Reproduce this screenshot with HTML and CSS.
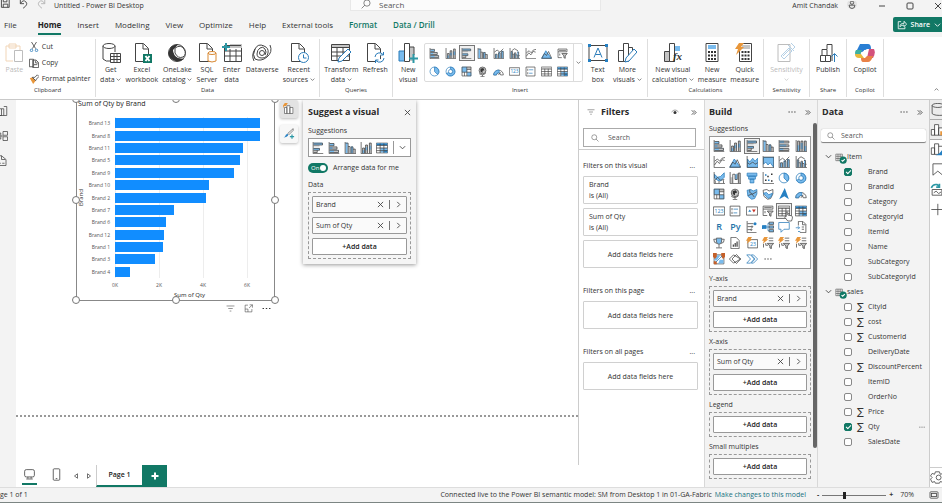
FILE: index.html
```html
<!DOCTYPE html>
<html lang="en">
<head>
    <meta charset="UTF-8">
    <meta name="viewport" content="width=device-width, initial-scale=1.0">
    <title>Untitled - Power BI Desktop</title>
    <link rel="stylesheet" href="styles.css">
</head>
<body>
    <!-- icon sprite -->
    <svg class="sprite" aria-hidden="true">
        <symbol id="barstack" viewBox="0 0 16 16"><path class="b" d="M2 2h6v3H2zM2 6.500h10v3H2zM2 11h12v3H2z"/><path class="g" d="M6 6.500h6v3H6zM8 11h6v3H8z"/><path class="k" d="M1.500 0v15.500H15M2 2h6v3H2M2 6.500h10v3H2M2 11h12v3H2"/></symbol>
        <symbol id="colstack" viewBox="0 0 16 16"><path class="g" d="M3 8h3v7H3zM7 4h3v11H7zM12 1h3v14h-3z"/><path class="b" d="M3 11h3v4H3zM7 7h3v4H7zM12 5h3v5h-3z"/><path class="k" d="M1.500 0v15.500H16M3.500 15V8H6v7M7.500 15V4H10v11M12.500 15V1.500H15V15"/></symbol>
        <symbol id="barclus" viewBox="0 0 16 16"><path class="b" d="M2 1h12v3H2zM2 8h8v3H2z"/><path class="g" d="M2 4h8v2H2zM2 11h5v3H2z"/><path class="k" d="M1.500 0v15.500H15M2 1.500h12V4H2M2 8.500h8V11H2M7 11v3H2"/></symbol>
        <symbol id="colclus" viewBox="0 0 16 16"><path class="b" d="M2 1h3v14H2zM9 6h3v9H9z"/><path class="g" d="M5 6h2v9H5zM12 9h3v6h-3z"/><path class="k" d="M1.500 0v15.500H16M5.500 15V1.500H2M5.500 6H8v9M9.500 15V6.500H12V15M12 9.500h3V15"/></symbol>
        <symbol id="bar100" viewBox="0 0 16 16"><path class="g" d="M2 1h12v3H2zM2 6h12v3H2zM2 11h12v3H2z"/><path class="b" d="M2 1h6v3H2zM2 6h9v3H2zM2 11h5v3H2z"/><path class="k" d="M1.500 0v15.500H15M2 1.500h12.500V4H2M2 6.500h12.500V9H2M2 11.500h12.500V14H2"/></symbol>
        <symbol id="col100" viewBox="0 0 16 16"><path class="g" d="M3 1h3v14H3zM7.500 1h3v14h-3zM12 1h3v14h-3z"/><path class="b" d="M3 7h3v8H3zM7.500 4h3v8h-3zM12 8h3v7h-3z"/><path class="k" d="M1.500 0v15.500H16M3.500 15V1.500H6V15M8 15V1.500h2.500V15M12.500 15V1.500H15V15"/></symbol>
        <symbol id="line" viewBox="0 0 16 16"><path class="k" d="M1.500 0v15.500H16M2 12l3.500-5 3 3L12 5l3.500 1M2 7l4-3 3 3 3-4 4-1"/></symbol>
        <symbol id="area" viewBox="0 0 16 16"><path class="b s" d="M1 15l6-11 8 11z"/><path class="k" d="M1 15l4-7 3 3 3-6 4.500 10z"/></symbol>
        <symbol id="stackarea" viewBox="0 0 16 16"><path class="b s" d="M2 4l3 4 4-5 3 4 3.500-4V15H2z"/><path class="k" d="M1.500 0v15.500H16M2 9l3 2 4-3 3 3 3.500-2"/></symbol>
        <symbol id="area100" viewBox="0 0 16 16"><path class="b s" d="M2 2h13.500v13L11 9l-3 3-3-4-3 3z"/><path class="k" d="M1.500 0v15.500H16V1.500H2"/></symbol>
        <symbol id="combo1" viewBox="0 0 16 16"><path class="b" d="M3 9h3v6H3zM7.500 6h3v9h-3zM12 4h3v11h-3z"/><path class="k" d="M1.500 0v15.500H16M3.500 15V9H6v6M8 15V7h2.500v8M12.500 15V5H15v10M2 6l4-3 4 3 5-5"/></symbol>
        <symbol id="combo2" viewBox="0 0 16 16"><path class="b" d="M3 5h2v10H3zM8 8h2v7H8zM12 5h2v10h-2z"/><path class="k" d="M1.500 0v15.500H16M3 15V5h2v10M5 9h2v6M8 15V7h2v8M10 10h2v5M12 6h2v9M14 11h1.500M4 4l4-3 5 3"/></symbol>
        <symbol id="ribbonchart" viewBox="0 0 16 16"><path class="b s" d="M2 3l4 4 4-1 5-5v6l-5 5-4-1-4-3z"/><path class="k" d="M1.500 0v15.500H16M2 12l4-5 4 4 5-1M3 15v-3M8 15v-3M14 15v-4"/></symbol>
        <symbol id="waterfall" viewBox="0 0 16 16"><path class="g" d="M2 7h3v8H2zM12 1h3v14h-3z"/><path class="b" d="M8 3h3v7H8z"/><path class="k" d="M1.500 0v15.500H16M5 15V3h3v7h3V2M12.500 15V1.500H15V15"/></symbol>
        <symbol id="funnel" viewBox="0 0 16 16"><path class="b s" d="M1.500 1.500h13v4h-13zM3.500 5.500h9v4h-9zM5.500 9.500h5v5h-5z"/></symbol>
        <symbol id="scatter" viewBox="0 0 16 16"><path class="k" d="M1.500 0v15.500H16"/><path class="d" d="M4 10h2v2H4zM7 5h2v2H7zM12 2h2v2h-2zM12 11h2v2h-2z"/><path class="bb" d="M8 10h2v2H8zM4 3h2v2H4z"/></symbol>
        <symbol id="pie" viewBox="0 0 16 16"><circle class="w s" cx="8" cy="8" r="6.500"/><path class="b s" d="M8 1.500a6.500 6.500 0 0 1 4.500 11L8 8z"/></symbol>
        <symbol id="donut" viewBox="0 0 16 16"><circle class="w s" cx="8" cy="8" r="6.500"/><path class="b s" d="M8 1.500A6.500 6.500 0 1 1 2 11l3.500-1.500A3 3 0 1 0 8 5z"/><circle class="w s" cx="8" cy="8" r="3"/></symbol>
        <symbol id="treemap" viewBox="0 0 16 16"><path class="b" d="M1 1h8v8H1zM9 9h6v6H9z"/><path class="g" d="M9 1h6v4H9z"/><path class="k" d="M1.500 1.500h13v13h-13zM8.500 1.500v13M1.500 9h7M8.500 5h6M8.500 9h6M5 9v5.500"/></symbol>
        <symbol id="globe" viewBox="0 0 16 16"><circle class="g k" cx="8" cy="6.500" r="5"/><path class="d" d="M5 4l4-1 2 3-3 1v3L5 8z"/><path class="k" d="M3 11q5 4 10-1M8 13v2M5 15.500h6"/></symbol>
        <symbol id="map" viewBox="0 0 16 16"><path class="b s" d="M1.500 3l5-1 3 2 5-2v6l-3 6-4 1-5-4z"/><path class="k" d="M5 2v4l4 2 5-3M3 10l5-2 3 4"/></symbol>
        <symbol id="shapemap" viewBox="0 0 16 16"><path class="w k" d="M1.500 3l5-1 3 2 5-2v6l-3 6-4 1-5-4z"/><path class="b s" d="M2 7l4-1 3 3 5-2-2 5-4 2z"/></symbol>
        <symbol id="azure" viewBox="0 0 16 16"><path class="bb" d="M9 0l5.500 15L8.500 11 1.500 15z"/></symbol>
        <symbol id="gauge" viewBox="0 0 16 16"><path class="w k" d="M1 13a7 7 0 0 1 14 0h-4a3 3 0 0 0-6 0z"/><path class="b s" d="M1 13A7 7 0 0 1 9 6v4a3 3 0 0 0-4 3z"/><path class="k" d="M8 13l3-4"/></symbol>
        <symbol id="card" viewBox="0 0 16 16"><path class="w k" d="M.500 2.500h15v11H.500z"/><text x="8" y="10.500" class="num">123</text></symbol>
        <symbol id="multicard" viewBox="0 0 16 16"><path class="w k" d="M1.500 1.500h13v13h-13z"/><path class="s" d="M6 5.500h6M6 10.500h5"/><path class="k" d="M4 4v3M4 9v3"/></symbol>
        <symbol id="kpi" viewBox="0 0 16 16"><path class="w k" d="M.500 2.500h15v11H.500z"/><path class="bb" d="M3 9l2-3 2 3z"/><path class="red" d="M8 6h5l-2.500 4z"/></symbol>
        <symbol id="slicer" viewBox="0 0 16 16"><path class="w k" d="M1.500 1.500h13v4h-13zM1.500 5.500V14H7"/><path class="g k" d="M7 8h8l-3 3.500V15l-2-1v-2.500z"/><path class="k" d="M3 3.500h10M4 8v3"/></symbol>
        <symbol id="table" viewBox="0 0 16 16"><path class="w k" d="M.500 1.500h15v13H.500z"/><path class="g" d="M1 2h14v2H1z"/><path class="k" d="M.500 4.500h15M.500 8h15M.500 11.500h15M5.500 4v10.500M10.500 4v10.500"/></symbol>
        <symbol id="matrix" viewBox="0 0 16 16"><path class="w k" d="M.500 1.500h15v13H.500z"/><path class="b" d="M1 2h14v3H1zM6 8h9v6H6z"/><path class="bb" d="M1 2h14v2H1zM11 11h4v3h-4z"/><path class="k" d="M.500 4.500h15M.500 8h15M.500 11.500h15M5.500 2v12.500M10.500 2v12.500"/></symbol>
        <symbol id="influencer" viewBox="0 0 16 16"><path class="k" d="M1.500 0v15.500H14M2 3.500h8M2 7.500h5M2 11.500h4"/><circle class="bb" cx="12" cy="3.500" r="2"/><circle class="g k" cx="8" cy="7.500" r="1"/><circle class="g k" cx="7" cy="11.500" r="1"/></symbol>
        <symbol id="decomp" viewBox="0 0 16 16"><path class="s" d="M5 8h4M8 8V3h2M8 8v5h2"/><path class="bb" d="M0 5.500h6v5H0z"/><path class="b k" d="M9.500 1.500h6v3h-6zM9.500 6.500h6v3h-6zM9.500 11.500h6v3h-6z"/></symbol>
        <symbol id="qna" viewBox="0 0 16 16"><path class="w s" d="M1 2h14v9H8l-4 4v-4H1z"/></symbol>
        <symbol id="narrative" viewBox="0 0 16 16"><path class="w k" d="M4.500 6V.500h6l4 4v11h-8"/><path class="k" d="M10 1v4h4M9 8h3M9 11h3"/><path class="s" d="M1 9h5M4 7l2 2-2 2M4 14h3"/></symbol>
        <symbol id="trophy" viewBox="0 0 16 16"><path class="b k" d="M4.500 1.500h7V7L8 10 4.500 7z"/><path class="k" d="M4 3H1l1 4 4 2M12 3h3l-1 4-4 2M8 10v4M4 14.500h8"/></symbol>
        <symbol id="paginated" viewBox="0 0 16 16"><path class="w k" d="M2.500.500h7l4 4v11h-11z"/><path class="d" d="M5 10h1.500v3H5zM7.500 8H9v5H7.500zM10 6h1.500v7H10z"/></symbol>
        <symbol id="newcard" viewBox="0 0 16 16"><path class="w k" d="M2.500 3.500h13v11h-13z"/><text x="9.500" y="12" class="num">23</text><use href="#bolt"/></symbol>
        <symbol id="bolt" viewBox="0 0 16 16"><path class="o" d="M3 0h5L6 3h2.500L1 9l1.500-4H0z"/></symbol>
        <symbol id="boltslicer" viewBox="0 0 16 16"><path class="k" d="M9 1.500h6M9 5h6M2 9v5M5 8v3h3"/><path class="g k" d="M7 8.500h8.500l-3 3.500v3.500l-2-1V12z"/><use href="#bolt"/></symbol>
        <symbol id="arcgis" viewBox="0 0 16 16"><path class="w k" d="M1.500 2.500h13v12h-13z"/><path class="b" d="M5 3h5l-5 7H2V7zM9 9h5v5H7z"/><path class="rust" d="M0 0h5v5l-2.500 3L0 5zM11 0h5v5l-2.500 3L11 5zM1 11h4v4H1z"/><path class="s" d="M4 12l8-8"/></symbol>
        <symbol id="powerapps" viewBox="0 0 16 16"><path class="w k" d="M.500 8L6 2.500 15.500 8 6 13.500z"/><path class="k" d="M4 8l6-6 5.500 6-5.500 6z"/></symbol>
        <symbol id="automate" viewBox="0 0 16 16"><path class="w s" d="M1 2.500h5L11 8l-5 5.500H1L6 8z"/><path class="w s" d="M7 2.500h3L15.500 8 10 13.500H7L12 8z"/></symbol>
        <symbol id="dots" viewBox="0 0 16 16"><path class="d" d="M1 7h2.500v2H1zM6.750 7h2.500v2h-2.500zM12.500 7H15v2h-2.500z"/></symbol>

        <symbol id="close" viewBox="0 0 8 8"><path class="k" d="M1 1l6 6M7 1L1 7"/></symbol>
        <symbol id="right" viewBox="0 0 8 8"><path class="k" d="M2.500 1l3 3-3 3"/></symbol>
        <symbol id="down" viewBox="0 0 8 8"><path class="k" d="M1 2.500l3 3 3-3"/></symbol>
        <symbol id="double" viewBox="0 0 8 8"><path class="k" d="M2 1.500L4.500 4 2 6.500M4.500 1.500L7 4 4.500 6.500"/></symbol>
        <symbol id="search" viewBox="0 0 16 16"><circle class="k" cx="6.500" cy="6.500" r="5"/><path class="k" d="M10 10l5 5"/></symbol>
        <symbol id="filter" viewBox="0 0 16 16"><path class="k" d="M1 3.500h14M4 8h8M6.500 12.500h3"/></symbol>
        <symbol id="eye" viewBox="0 0 16 16"><path class="k" d="M1 8q7-8 14 0"/><circle class="d" cx="8" cy="9" r="3"/></symbol>
        <symbol id="dbtable" viewBox="0 0 22 20"><path class="k" d="M1.500 2h12v12h-12zM1.500 6h12M1.500 10h12M5.500 2v12M9.500 2v12"/><circle class="green" cx="15" cy="13" r="6.500"/><path class="tick" d="M12 13l2 2 4-4"/></symbol>
        <symbol id="addvisual" viewBox="0 0 20 20"><path class="w k" d="M2.500 7.500h4v10h-4zM6.500 4.500h5v13h-5zM11.500 7.500h5v10h-5z"/><path class="o" d="M3 0h5L5 5H2l-1 4-1-5z"/></symbol>
        <symbol id="brush" viewBox="0 0 20 20"><path class="k" d="M17 1L8 9l2 2 7-7z"/><path class="bb" d="M8 10q3 4-7 6 3-1 4-5z"/><path class="teal" d="M15 11v7M11.500 14.500h7"/></symbol>
    </svg>

    <div class="app">
        <header class="titlebar">
            <div class="title-left">
                <svg class="ti" viewBox="0 0 12 12"><path class="k" d="M1 0v8h8.500V0M3 8V4.500h5V8M3 0v2h4V0"/></svg>
                <svg class="ti" viewBox="0 0 12 12"><path class="k" d="M2 0v4h4M2 4q3-5 6-2t-3 7"/></svg>
                <svg class="ti faded" viewBox="0 0 12 12"><path class="k" d="M9 0v4H5M9 4Q6-1 3 2t3 7"/></svg>
                <span>Untitled - Power BI Desktop</span>
            </div>
            <label class="title-search">
                <svg class="flip"><use href="#search"/></svg>
                <input type="text" placeholder="Search" aria-label="Search">
            </label>
            <div class="title-right">
                <span>Amit Chandak</span>
                <svg class="avatar" viewBox="0 0 12 12"><circle cx="6" cy="4" r="6" fill="#e3e3e3"/><circle class="k" cx="6" cy="2" r="2"/><path class="k" d="M2.500 5h7q0 4-3.500 4t-3.500-4z"/></svg>
                <svg class="win" viewBox="0 0 8 8"><path class="k" d="M1 4h6"/></svg>
                <svg class="win" viewBox="0 0 8 8"><rect class="k" x="1" y="1" width="6" height="6" rx="1"/></svg>
                <svg class="win"><use href="#close"/></svg>
            </div>
        </header>

        <nav class="tabs">
            <a href="#" class="file">File</a>
            <a href="#" class="active">Home</a>
            <a href="#">Insert</a>
            <a href="#">Modeling</a>
            <a href="#">View</a>
            <a href="#">Optimize</a>
            <a href="#">Help</a>
            <a href="#">External tools</a>
            <a href="#" class="context">Format</a>
            <a href="#" class="context">Data / Drill</a>
            <button class="share">
                <svg viewBox="0 0 12 12"><path d="M5 2H1.500v8.500h8V8M3.500 8q0-4 5-4V1.500L11.500 5 8.500 8V6q-3 0-5 2z"/></svg>
                Share
                <svg class="chev" viewBox="0 0 8 8"><path d="M1 2.500l3 3 3-3"/></svg>
            </button>
        </nav>

        <section class="ribbon">
            <div class="group clipboard">
                <div class="tools">
                    <button class="tool single faded">
                        <svg viewBox="0 0 20 20"><path class="of" d="M9 18H2V3h14v4M5 1h7v4H5z"/><path class="w k" d="M10.500 7.500h8v11h-8z"/></svg>
                        Paste
                    </button>
                    <div class="stack">
                        <button><svg viewBox="0 0 12 12"><path class="k" d="M3 0l5 8M9 0L4 8"/><circle class="s" cx="3" cy="10" r="1.500"/><circle class="s" cx="9" cy="10" r="1.500"/></svg>Cut</button>
                        <button><svg viewBox="0 0 12 12"><path class="w k" d="M.500 1.500h5v9h-5zM4.500 2.500h4l3 3v6h-7z"/><path class="k" d="M8 3v3h3M6 8h4"/></svg>Copy</button>
                        <button><svg viewBox="0 0 12 12"><path class="o" d="M1 5l3-1 4 4-3 4z"/><path class="k" d="M4 4l4 4 1-2 3-3-2-2-3 3z"/></svg>Format painter</button>
                    </div>
                </div>
                <div class="group-name">Clipboard</div>
            </div>

            <div class="group data">
                <div class="tools">
                    <button class="tool">
                        <svg viewBox="0 0 20 20"><path class="w k" d="M2 3v13q3 3 7 2M14 3v6"/><ellipse class="w k" cx="8" cy="3" rx="6" ry="2.500"/><path class="w k" d="M9.500 10.500h10v9h-10zM9.500 13.500h10M9.500 16.500h10M13 11v8M16 11v8"/></svg>
                        Get<br>data <svg class="chev"><use href="#down"/></svg>
                    </button>
                    <button class="tool">
                        <svg viewBox="0 0 20 20"><path class="w k" d="M3.500.500h8l5 5v13h-13zM11 1v5h5"/><path class="xl" d="M11 11h9v9h-9z"/><path class="tick" d="M13.500 13l4 5M17.500 13l-4 5"/></svg>
                        Excel<br>workbook
                    </button>
                    <button class="tool">
                        <svg viewBox="0 0 20 20"><circle class="w k" cx="10" cy="10" r="8.500"/><path class="d" d="M2 8Q4 1 11 1.500L6 7q0 5 5 8l6 1q-5 4-11 1T2 8z"/><path class="w k" d="M8 5q6-4 9 1t-1 8q-5 2-8-4z"/></svg>
                        OneLake<br>catalog <svg class="chev"><use href="#down"/></svg>
                    </button>
                    <button class="tool">
                        <svg viewBox="0 0 20 20"><path class="w k" d="M2.500.500h8l5 5v13h-13zM10 1v5h5"/><path class="w of" d="M11 10v8q4 2 8 0v-8"/><ellipse class="w of" cx="15" cy="10" rx="4" ry="1.500"/></svg>
                        SQL<br>Server
                    </button>
                    <button class="tool">
                        <svg viewBox="0 0 20 20"><path class="w k" d="M2.500 2.500h17v16h-17z"/><path class="g" d="M8 1h12v4H8z"/><path class="k" d="M3 8h16M3 13h16M8 6v12M14 6v12M8 2.500h11"/><path class="teal" d="M4 0v8M0 4h8"/></svg>
                        Enter<br>data
                    </button>
                    <button class="tool single">
                        <svg viewBox="0 0 20 20"><path class="k" d="M18 2q3 7-3 12T3 16Q0 12 3 6t9-3q5 2 4 7t-6 5-5-4 3-6 5 1 0 6M2 18q-3-6 1-12"/><circle class="k" cx="10" cy="10" r="2.500"/></svg>
                        Dataverse
                    </button>
                    <button class="tool">
                        <svg viewBox="0 0 20 20"><path class="w k" d="M2.500.500h8l5 5v13h-13zM10 1v5h5"/><circle class="w s" cx="14.500" cy="14.500" r="5"/><path class="s" d="M14.500 11.500v3.500h3"/></svg>
                        Recent<br>sources <svg class="chev"><use href="#down"/></svg>
                    </button>
                </div>
                <div class="group-name">Data</div>
            </div>

            <div class="group queries">
                <div class="tools">
                    <button class="tool">
                        <svg viewBox="0 0 20 20"><path class="w k" d="M.500 1.500h18v16H.500z"/><path class="g" d="M1 2h17v2H1z"/><path class="k" d="M1 4.500h17M1 9h17M1 13h17M6 5v12M12 5v12"/><path class="w s" d="M7 19l1-4 9-9 3 3-9 9z"/></svg>
                        Transform<br>data <svg class="chev"><use href="#down"/></svg>
                    </button>
                    <button class="tool single">
                        <svg viewBox="0 0 20 20"><path class="w k" d="M2.500.500h8l5 5v13h-13zM10 1v5h5"/><path class="w s" d="M10 14a4.500 4.500 0 0 1 8-2.500M19 15a4.500 4.500 0 0 1-8 2.500M18.500 9v3h-3M10.500 20v-3h3"/></svg>
                        Refresh
                    </button>
                </div>
                <div class="group-name">Queries</div>
            </div>

            <div class="group insert">
                <div class="tools">
                    <button class="tool">
                        <svg viewBox="0 0 20 20"><path class="b" d="M1 8h5v10H1z"/><path class="w k" d="M6.500.500h5v18h-5z"/><path class="g" d="M12 4h4v14h-4z"/><path class="k" d="M12 4h4v8"/><path class="s" d="M6 18H1V8h5"/><path class="teal" d="M15.500 11v9M11 15.500h9"/></svg>
                        New<br>visual
                    </button>
                    <div class="gallery">
                        <div class="gallery-grid">
                            <button aria-label="Stacked bar"><svg><use href="#barstack"/></svg></button>
                            <button aria-label="Stacked column"><svg><use href="#colstack"/></svg></button>
                            <button aria-label="Clustered bar" class="on"><svg><use href="#barclus"/></svg></button>
                            <button aria-label="Clustered column"><svg><use href="#colclus"/></svg></button>
                            <button aria-label="Line and column"><svg><use href="#combo1"/></svg></button>
                            <button aria-label="Line and clustered column"><svg><use href="#combo2"/></svg></button>
                            <button aria-label="Line"><svg><use href="#line"/></svg></button>
                            <button aria-label="Area"><svg><use href="#area"/></svg></button>
                            <button aria-label="Slicer"><svg><use href="#slicer"/></svg></button>
                            <button aria-label="Pie"><svg><use href="#pie"/></svg></button>
                            <button aria-label="Donut"><svg><use href="#donut"/></svg></button>
                            <button aria-label="Treemap"><svg><use href="#treemap"/></svg></button>
                            <button aria-label="Map"><svg><use href="#globe"/></svg></button>
                            <button aria-label="Gauge"><svg><use href="#gauge"/></svg></button>
                            <button aria-label="Card"><svg><use href="#card"/></svg></button>
                            <button aria-label="Multi-row card"><svg><use href="#multicard"/></svg></button>
                            <button aria-label="Table"><svg><use href="#table"/></svg></button>
                            <button aria-label="Matrix"><svg><use href="#matrix"/></svg></button>
                        </div>
                        <button class="gallery-more" aria-label="More visuals"><svg class="chev"><use href="#down"/></svg></button>
                    </div>
                    <button class="tool">
                        <svg viewBox="0 0 20 20"><path class="w k" d="M1 2.500h18v15H1z"/><path class="s" d="M6 14.500L10 5l4 9.500M7.500 11.500h5"/><path class="bb" d="M0 1h3v3H0zM17 1h3v3h-3zM0 16h3v3H0zM17 16h3v3h-3z"/></svg>
                        Text<br>box
                    </button>
                    <button class="tool">
                        <svg viewBox="0 0 20 20"><path class="w k" d="M1.500 7.500h5v11h-5zM6.500.500h5v18h-5zM11.500 4.500h4v8"/><path class="w s" d="M8 19l1-4 8-9 3 3-8 9z"/></svg>
                        More<br>visuals <svg class="chev"><use href="#down"/></svg>
                    </button>
                </div>
                <div class="group-name">Insert</div>
            </div>

            <div class="group calc">
                <div class="tools">
                    <button class="tool">
                        <svg viewBox="0 0 20 20"><path class="g k" d="M1.500 8.500h5v10h-5z"/><path class="w k" d="M6.500.500h5v18h-5z"/><path class="b" d="M12 3h5v5h-5z"/><text x="14.500" y="17" class="fx">fx</text></svg>
                        New visual<br>calculation <svg class="chev"><use href="#down"/></svg>
                    </button>
                    <button class="tool">
                        <svg viewBox="0 0 20 20"><path class="w k" d="M4 .500h12v18H4z"/><path class="b" d="M6 2h8v4H6z"/><path class="d" d="M6 8h2v2H6zM9 8h2v2H9zM12 8h2v2h-2zM6 11.500h2v2H6zM9 11.500h2v2H9zM12 11.500h2v2h-2zM6 15h2v2H6zM9 15h2v2H9zM12 15h2v2h-2z"/></svg>
                        New<br>measure
                    </button>
                    <button class="tool">
                        <svg viewBox="0 0 20 20"><path class="w k" d="M4.500.500h12v18h-12z"/><path class="g" d="M7 2h8v4H7z"/><path class="d" d="M6.500 8h2v2h-2zM9.500 8h2v2h-2zM12.500 8h2v2h-2zM6.500 11.500h2v2h-2zM9.500 11.500h2v2h-2zM12.500 11.500h2v2h-2zM6.500 15h2v2h-2zM9.500 15h2v2h-2zM12.500 15h2v2h-2z"/><path class="o" d="M4 0h5L6 4h3L1 12l2-6H0z"/></svg>
                        Quick<br>measure
                    </button>
                </div>
                <div class="group-name">Calculations</div>
            </div>

            <div class="group sens">
                <div class="tools">
                    <button class="tool faded">
                        <svg viewBox="0 0 20 20"><path class="w k" d="M2 1.500h12v17H2z"/><path class="s" d="M5 13l8-8 3 3-8 8zM7 13l7-7M12 2l6 6M15 0l4 4-2 2"/></svg>
                        Sensitivity<br><svg class="chev"><use href="#down"/></svg>
                    </button>
                </div>
                <div class="group-name">Sensitivity</div>
            </div>

            <div class="group publish">
                <div class="tools">
                    <button class="tool single">
                        <svg viewBox="0 0 20 20"><path class="w k" d="M2.500 12.500h5v6h-5zM7.500 12.500h5v6h-5zM4 12V6.500h5V12M9 6V1.500h5V18"/><path class="s" d="M16.500 19V11M13.500 13.500l3-3 3 3"/></svg>
                        Publish
                    </button>
                </div>
                <div class="group-name">Share</div>
            </div>

            <div class="group copilot">
                <div class="tools">
                    <button class="tool single">
                        <svg viewBox="0 0 20 20"><path fill="#2a7fd4" d="M5 1h8q3 0 3 5h-4L7 9H1z"/><path fill="#3eb0a0" d="M1 7h6l-2 6H1q-2-3 0-6z"/><path fill="#e8b93c" d="M0 11h6l3 4H4q-4 0-4-4z"/><path fill="#d3527c" d="M14 6h5q2 4-1 9h-6z"/><path fill="#e98247" d="M12 13h6q-2 6-5 6H8q-2 0-2-4h4z"/><path fill="#fff" d="M9 7h3l-1 5H8z"/></svg>
                        Copilot
                    </button>
                </div>
                <div class="group-name">Copilot</div>
            </div>
            <button class="collapse" aria-label="Collapse ribbon"><svg class="chev" viewBox="0 0 8 8"><path class="k" d="M1 5.500l3-3 3 3"/></svg></button>
        </section>

        <main class="main">
            <nav class="views">
                <svg viewBox="0 0 16 16"><path class="k" d="M0 14h6V5H2M6 5h3v9M9 2h4v12H0"/></svg>
                <svg viewBox="0 0 16 16"><path class="k" d="M0 4h5v8H0M5 8h3M8 2h6v5H8zM8 9h6v5H8z"/></svg>
                <svg viewBox="0 0 16 16"><path class="k" d="M0 1h6l6 5v8H0M6 1v5h5M2 11h3M7 11h3"/></svg>
            </nav>

            <div class="center">
                <div class="work">
                    <div class="canvas">
                        <div class="page">
                            <figure class="visual">
                                <figcaption>Sum of Qty by Brand</figcaption>
                                <div class="chart">
                                    <div class="y-title"><span>Brand</span></div>
                                    <ul class="cats">
                                        <li>Brand 13</li><li>Brand 8</li><li>Brand 11</li><li>Brand 5</li><li>Brand 9</li><li>Brand 10</li><li>Brand 2</li>
                                        <li>Brand 7</li><li>Brand 6</li><li>Brand 12</li><li>Brand 1</li><li>Brand 3</li><li>Brand 4</li>
                                    </ul>
                                    <ul class="bars">
                                        <li><i style="width:94%"></i></li>
                                        <li><i style="width:94%"></i></li>
                                        <li><i style="width:83%"></i></li>
                                        <li><i style="width:81%"></i></li>
                                        <li><i style="width:77%"></i></li>
                                        <li><i style="width:61%"></i></li>
                                        <li><i style="width:59%"></i></li>
                                        <li><i style="width:38%"></i></li>
                                        <li><i style="width:33%"></i></li>
                                        <li><i style="width:32%"></i></li>
                                        <li><i style="width:31%"></i></li>
                                        <li><i style="width:26%"></i></li>
                                        <li><i style="width:10%"></i></li>
                                    </ul>
                                    <div class="ticks"><span>0K</span><span>2K</span><span>4K</span><span>6K</span></div>
                                    <div class="x-title">Sum of Qty</div>
                                </div>
                                <b class="h tl"></b><b class="h tc"></b><b class="h tr"></b>
                                <b class="h ml"></b><b class="h mr"></b>
                                <b class="h bl"></b><b class="h bc"></b><b class="h br"></b>
                                <div class="visual-tools">
                                    <svg><use href="#filter"/></svg>
                                    <svg viewBox="0 0 16 16"><path class="k" d="M7 2H2v12h12V9M10 1.500h5v5M15 1.500L9 7M2 9h5v5"/></svg>
                                    <svg><use href="#dots"/></svg>
                                </div>
                            </figure>

                            <div class="side-tools">
                                <button class="on" aria-label="Suggest a visual"><svg><use href="#addvisual"/></svg></button>
                                <button aria-label="Format visual"><svg><use href="#brush"/></svg></button>
                            </div>

                            <aside class="suggest">
                                <div class="suggest-head">
                                    <h2>Suggest a visual</h2>
                                    <button aria-label="Close"><svg class="x"><use href="#close"/></svg></button>
                                </div>
                                <p>Suggestions</p>
                                <div class="suggest-row">
                                    <svg class="on"><use href="#barclus"/></svg>
                                    <svg><use href="#barstack"/></svg>
                                    <svg><use href="#colclus"/></svg>
                                    <svg><use href="#colstack"/></svg>
                                    <svg><use href="#matrix"/></svg>
                                    <button aria-label="More"><svg class="x"><use href="#down"/></svg></button>
                                </div>
                                <label class="toggle"><input type="checkbox" checked><span class="pill">On</span>Arrange data for me</label>
                                <p>Data</p>
                                <div class="well">
                                    <div class="field"><span>Brand</span><button aria-label="Remove"><svg class="x"><use href="#close"/></svg></button><button class="next" aria-label="Options"><svg class="x"><use href="#right"/></svg></button></div>
                                    <div class="field"><span>Sum of Qty</span><button aria-label="Remove"><svg class="x"><use href="#close"/></svg></button><button class="next" aria-label="Options"><svg class="x"><use href="#right"/></svg></button></div>
                                    <button class="add">+Add data</button>
                                </div>
                            </aside>
                        </div>
                    </div>

                    <aside class="filters">
                        <div class="pane-head">
                            <svg class="lead"><use href="#filter"/></svg>
                            <h2>Filters</h2>
                            <svg class="hi"><use href="#eye"/></svg>
                            <svg class="x"><use href="#double"/></svg>
                        </div>
                        <label class="filter-search"><svg><use href="#search"/></svg><input type="text" placeholder="Search" aria-label="Search filters"></label>
                        <div class="filter-list">
                            <div class="filter-title">Filters on this visual <span>...</span></div>
                            <div class="card">Brand<br>is (All)</div>
                            <div class="card">Sum of Qty<br>is (All)</div>
                            <div class="card drop">Add data fields here</div>
                            <div class="filter-title">Filters on this page <span>...</span></div>
                            <div class="card drop">Add data fields here</div>
                            <div class="filter-title">Filters on all pages <span>...</span></div>
                            <div class="card drop">Add data fields here</div>
                        </div>
                    </aside>
                </div>

                <div class="pages">
                    <button class="device on" aria-label="Desktop layout"><svg viewBox="0 0 16 16"><rect class="k" x="2" y="2" width="12" height="9" rx="2"/><path class="k" d="M4 13.500h8M6 11v2M10 11v2"/></svg></button>
                    <button class="device" aria-label="Mobile layout"><svg viewBox="0 0 16 16"><rect class="k" x="4" y="1" width="8" height="14" rx="1"/><path class="k" d="M7 13h2"/></svg></button>
                    <button class="arrow" aria-label="Previous page"><svg viewBox="0 0 8 8"><path class="k" d="M6 1v6L2 4z"/></svg></button>
                    <button class="arrow" aria-label="Next page"><svg viewBox="0 0 8 8"><path class="k" d="M2 1v6l4-3z"/></svg></button>
                    <button class="page-tab">Page 1</button>
                    <button class="page-add" aria-label="New page"><svg viewBox="0 0 8 8"><path d="M4 .500v7M.500 4h7"/></svg></button>
                </div>
            </div>

            <aside class="build">
                <div class="pane-head">
                    <h2>Build</h2>
                    <svg class="hi"><use href="#dots"/></svg>
                    <svg class="x"><use href="#double"/></svg>
                </div>
                <div class="build-body">
                    <p>Suggestions</p>
                    <div class="visuals">
                        <button><svg><use href="#barstack"/></svg></button>
                        <button><svg><use href="#colstack"/></svg></button>
                        <button class="on"><svg><use href="#barclus"/></svg></button>
                        <button><svg><use href="#colclus"/></svg></button>
                        <button><svg><use href="#bar100"/></svg></button>
                        <button><svg><use href="#col100"/></svg></button>
                        <button><svg><use href="#line"/></svg></button>
                        <button><svg><use href="#area"/></svg></button>
                        <button><svg><use href="#stackarea"/></svg></button>
                        <button><svg><use href="#area100"/></svg></button>
                        <button><svg><use href="#combo1"/></svg></button>
                        <button><svg><use href="#combo2"/></svg></button>
                        <button><svg><use href="#ribbonchart"/></svg></button>
                        <button><svg><use href="#waterfall"/></svg></button>
                        <button><svg><use href="#funnel"/></svg></button>
                        <button><svg><use href="#scatter"/></svg></button>
                        <button><svg><use href="#pie"/></svg></button>
                        <button><svg><use href="#donut"/></svg></button>
                        <button><svg><use href="#treemap"/></svg></button>
                        <button><svg><use href="#globe"/></svg></button>
                        <button><svg><use href="#map"/></svg></button>
                        <button><svg><use href="#shapemap"/></svg></button>
                        <button><svg><use href="#azure"/></svg></button>
                        <button><svg><use href="#gauge"/></svg></button>
                        <button><svg><use href="#card"/></svg></button>
                        <button><svg><use href="#multicard"/></svg></button>
                        <button><svg><use href="#kpi"/></svg></button>
                        <button><svg><use href="#slicer"/></svg></button>
                        <button class="on"><svg><use href="#table"/></svg>
                            <svg class="cursor" viewBox="0 0 12 14"><path d="M3 1q2-1 2 1v3l5 1q2 1 1 4l-1 3H5L1 8q0-2 2-1z"/></svg>
                        </button>
                        <button><svg><use href="#matrix"/></svg></button>
                        <button class="script">R</button>
                        <button class="script">Py</button>
                        <button><svg><use href="#influencer"/></svg></button>
                        <button><svg><use href="#decomp"/></svg></button>
                        <button><svg><use href="#qna"/></svg></button>
                        <button><svg><use href="#narrative"/></svg></button>
                        <button><svg><use href="#trophy"/></svg></button>
                        <button><svg><use href="#paginated"/></svg></button>
                        <button><svg><use href="#newcard"/></svg></button>
                        <button><svg><use href="#boltslicer"/></svg></button>
                        <button><svg><use href="#boltslicer"/></svg></button>
                        <button><svg><use href="#boltslicer"/></svg></button>
                        <button><svg><use href="#arcgis"/></svg></button>
                        <button><svg><use href="#powerapps"/></svg></button>
                        <button><svg><use href="#automate"/></svg></button>
                        <button><svg class="small"><use href="#dots"/></svg></button>
                    </div>
                    <p>Y-axis</p>
                    <div class="well">
                        <div class="field"><span>Brand</span><button aria-label="Remove"><svg class="x"><use href="#close"/></svg></button><button class="next" aria-label="Options"><svg class="x"><use href="#right"/></svg></button></div>
                        <button class="add">+Add data</button>
                    </div>
                    <p>X-axis</p>
                    <div class="well">
                        <div class="field"><span>Sum of Qty</span><button aria-label="Remove"><svg class="x"><use href="#close"/></svg></button><button class="next" aria-label="Options"><svg class="x"><use href="#right"/></svg></button></div>
                        <button class="add">+Add data</button>
                    </div>
                    <p>Legend</p>
                    <div class="well"><button class="add">+Add data</button></div>
                    <p>Small multiples</p>
                    <div class="well"><button class="add">+Add data</button></div>
                </div>
                <div class="scroll"></div>
            </aside>

            <aside class="fields">
                <div class="pane-head">
                    <h2>Data</h2>
                    <svg class="hi"><use href="#dots"/></svg>
                    <svg class="x"><use href="#double"/></svg>
                </div>
                <label class="field-search"><svg><use href="#search"/></svg><input type="text" placeholder="Search" aria-label="Search fields"></label>
                <div class="tree">
                    <div class="node"><svg class="x"><use href="#down"/></svg><svg class="tbl"><use href="#dbtable"/></svg>Item</div>
                    <label><input type="checkbox" checked><i></i>Brand</label>
                    <label><input type="checkbox"><i></i>BrandId</label>
                    <label><input type="checkbox"><i></i>Category</label>
                    <label><input type="checkbox"><i></i>CategoryId</label>
                    <label><input type="checkbox"><i></i>ItemId</label>
                    <label><input type="checkbox"><i></i>Name</label>
                    <label><input type="checkbox"><i></i>SubCategory</label>
                    <label><input type="checkbox"><i></i>SubCategoryId</label>
                    <div class="node"><svg class="x"><use href="#down"/></svg><svg class="tbl"><use href="#dbtable"/></svg>sales</div>
                    <label><input type="checkbox"><i>∑</i>CityId</label>
                    <label><input type="checkbox"><i>∑</i>cost</label>
                    <label><input type="checkbox"><i>∑</i>CustomerId</label>
                    <label><input type="checkbox"><i></i>DeilveryDate</label>
                    <label><input type="checkbox"><i>∑</i>DiscountPercent</label>
                    <label><input type="checkbox"><i></i>ItemID</label>
                    <label><input type="checkbox"><i></i>OrderNo</label>
                    <label><input type="checkbox"><i>∑</i>Price</label>
                    <label><input type="checkbox" checked><i>∑</i>Qty<svg class="row-more"><use href="#dots"/></svg></label>
                    <label><input type="checkbox"><i></i>SalesDate</label>
                </div>
            </aside>

            <nav class="rail">
                <button class="on"><svg viewBox="0 0 16 16"><ellipse class="k" cx="9" cy="3" rx="7" ry="2.500"/><path class="k" d="M2 3v10q3 3 14 2"/></svg></button>
                <button class="on"><svg viewBox="0 0 16 16"><path class="w k" d="M1 8h4v7H1zM5 2h5v13H5zM10 6h5v9h-5z"/><path class="o" d="M12 10h4v5h-4z"/></svg></button>
                <button><svg viewBox="0 0 16 16"><path class="w k" d="M1 6h4v8H1zM5 1h5v13H5zM10 4h5v6"/><path class="bb" d="M6 15q5-1 8-6h2v6z"/></svg></button>
                <button><svg viewBox="0 0 16 16"><path class="k" d="M3 1h13M3 1v14l6-5 6 5"/></svg></button>
                <button><svg viewBox="0 0 16 16"><path class="k" d="M2 8h12v7H2zM4 12l3-2 3 3 3-2"/><path class="teal" d="M1 6q2-5 7-4l3 2M11 1v4H7"/></svg></button>
                <button><svg viewBox="0 0 16 16"><path class="k" d="M1 8h15M9 1v14"/></svg></button>
                <button class="gear"><svg viewBox="0 0 16 16"><path class="k" d="M6 1h5l1 3 4-1v11l-4-1-1 2H6l-1-2-3 1-2-4 2-2-2-2 2-3 3 1z"/><circle class="k" cx="10" cy="8" r="3"/></svg></button>
            </nav>
        </main>

        <footer class="status">
            <span>ge 1 of 1</span>
            <span class="live">Connected live to the Power BI semantic model: SM from Desktop 1 in 01-GA-Fabric</span>
            <a href="#">Make changes to this model</a>
            <div class="zoom">
                <button>-</button>
                <input type="range" min="10" max="190" value="70" aria-label="Zoom">
                <button>+</button>
                <span>70%</span>
                <svg viewBox="0 0 12 10"><rect class="k" x="1" y="1" width="10" height="8" rx="1"/><rect class="k" x="3" y="3" width="6" height="4"/></svg>
            </div>
        </footer>
    </div>
</body>
</html>
```

FILE: styles.css
```css
*{
    margin: 0;
    padding: 0;
    box-sizing: border-box;
}

body{
    font-family: "Open Sans", "Noto Sans", sans-serif;
    font-size: 7px;
    line-height: 10px;
    color: #333;
    background-color: #f3f3f3;
    overflow: hidden;
}

button, input{
    font: inherit;
    color: inherit;
    background: none;
    border: none;
    outline: none;
}

ul{
    list-style: none;
}

a{
    color: inherit;
    text-decoration: none;
}

svg{
    display: block;
    flex-shrink: 0;
}

h2{
    font-size: 9px;
    line-height: 12px;
    font-weight: 700;
    color: #2a2a2a;
}

.sprite{
    display: none;
}

/* icon paint */
.k, .s, .of, .teal, .tick{
    fill: none;
    stroke: #444;
    stroke-width: 1;
}
.s{ stroke: #2b7cba; }
.of{ stroke: #d98a35; }
.teal{ stroke: #2d98a5; stroke-width: 2; }
.tick{ stroke: white; stroke-width: 2; }
.w{ fill: white; }
.b{ fill: #79bbed; }
.g{ fill: #c4c4c4; }
.d{ fill: #333; }
.bb{ fill: #2580c3; }
.o{ fill: #e8963a; }
.rust{ fill: #c4602a; }
.red{ fill: #c8372d; }
.green, .xl{ fill: #117865; }
.num{
    font-size: 7px;
    fill: #2580c3;
    text-anchor: middle;
}
.fx{
    font: italic bold 11px "Liberation Serif", serif;
    fill: #333;
    text-anchor: middle;
}
.faded{ opacity: .35; }

.chev{
    width: 5px;
    height: 5px;
}

.x{
    width: 7px;
    height: 7px;
}

.app{
    display: flex;
    flex-direction: column;
    height: 100vh;
    border-bottom: 1px solid #7c8583;
}

/* title bar */
.titlebar{
    display: grid;
    grid-template-columns: 350px 1fr 341px;
    height: 14px;
    line-height: 11px;
}

.title-left, .title-right{
    display: flex;
    height: 11px;
    align-items: center;
}

.title-left{
    gap: 6px;
}

.ti{
    width: 12px;
    height: 11px;
}

.title-search{
    display: flex;
    align-items: center;
    gap: 8px;
    height: 11px;
    padding: 0 10px 2px;
    background-color: #fbfbfb;
    border: 1px solid #e8e8e8;
    border-top: none;
    font-size: 8px;
}

.title-search svg{
    width: 10px;
    height: 10px;
}

.flip{
    transform: scaleX(-1);
}

.title-search input{
    width: 100%;
}

input::placeholder{
    color: #555;
    opacity: 1;
}

.title-right{
    justify-content: flex-end;
    gap: 20px;
}

.avatar{
    width: 12px;
    height: 10px;
    margin: 0 0 0 -12px;
}

.win{
    width: 8px;
    height: 8px;
}

/* menu tabs */
.tabs{
    display: flex;
    align-items: center;
    gap: 16px;
    height: 23px;
    padding-left: 4px;
    font-size: 8px;
}

.tabs a{
    padding: 3px 0;
    line-height: 10px;
    border-bottom: 2px solid transparent;
}

.tabs .file{
    margin-right: 5px;
}

.tabs .active{
    font-weight: 700;
    color: #222;
    border-color: #117865;
}

.tabs .context{
    font-weight: 600;
    color: #117865;
}

.share{
    display: flex;
    align-items: center;
    gap: 4px;
    height: 15px;
    margin: 0 0 2px auto;
    padding: 0 1px 0 4px;
    border-radius: 2px 0 0 2px;
    color: white;
    background-color: #117865;
    font-size: 7px;
    font-weight: 600;
}

.share svg{
    width: 10px;
    height: 10px;
    fill: none;
    stroke: white;
}

.share .chev{
    width: 7px;
}

/* ribbon */
.ribbon{
    display: flex;
    height: 62px;
    padding: 2px 0;
    background-color: #fff;
}

.group{
    display: flex;
    flex-direction: column;
    flex-shrink: 0;
    border-right: 1px solid #dedede;
    white-space: nowrap;
}

.clipboard{ width: 96px; }
.data{ width: 224px; }
.queries{ width: 73px; }
.insert{ width: 255px; }
.calc{ width: 116px; }
.sens{ width: 46px; }
.publish, .copilot{ width: 37px; }

.tools{
    display: flex;
    justify-content: space-evenly;
    flex: 1;
    min-height: 0;
    padding-top: 3px;
}

.tool{
    display: block;
    height: 44px;
    text-align: center;
}

/* one-line label keeps room for the second line */
.single{
    padding-bottom: 10px;
}

.tool > svg:first-child{
    width: 20px;
    height: 20px;
    margin: 0 auto 2px;
}

.tool .chev{
    display: inline-block;
}

.group-name{
    height: 12px;
    font-size: 6px;
    text-align: center;
}

.stack{
    margin-top: -3px;
}

.stack button{
    display: flex;
    align-items: center;
    gap: 3px;
    height: 16px;
}

.stack svg{
    width: 10px;
    height: 10px;
}

.gallery{
    display: flex;
    height: 39px;
    margin-top: 1px;
    border: 1px solid #dcdcdc;
    border-radius: 2px;
}

.gallery-grid{
    display: grid;
    grid-template-columns: repeat(9, 16px);
    grid-template-rows: 1fr 1fr;
    align-items: center;
    padding: 0 2px;
}

.gallery-grid button, .visuals button{
    display: flex;
    align-items: center;
    justify-content: center;
    width: 16px;
    height: 16px;
    border: 1px solid transparent;
}

.gallery-grid svg{
    width: 11px;
    height: 11px;
}

.gallery-grid .on, .visuals .on{
    border-color: #777;
    background-color: #f0f0f0;
}

.gallery-more{
    width: 9px;
    padding-left: 2px;
    border-left: 1px solid #dcdcdc;
}

.collapse{
    margin: auto 3px 5px auto;
}

/* main area */
.main{
    display: flex;
    flex: 1;
    min-height: 0;
    border-top: 1px solid #c9c9c9;
}

.views{
    display: flex;
    flex-direction: column;
    gap: 13px;
    width: 16px;
    padding-top: 5px;
}

.views svg{
    width: 12px;
    height: 12px;
    margin-left: -3px;
}

.center{
    display: flex;
    flex-direction: column;
    flex: 1;
    min-width: 0;
    background-color: #fff;
}

.work{
    display: flex;
    flex: 1;
    min-height: 0;
}

.canvas{
    flex: 1;
    min-width: 0;
    overflow: hidden;
    padding-bottom: 48px;
}

.page{
    position: relative;
    height: 100%;
    border-bottom: 2px dotted #999;
}

.visual{
    position: absolute;
    left: 60px;
    top: 0;
    width: 199px;
    height: 201px;
    border: 1px solid #888;
    border-top: none;
}

.visual figcaption{
    padding-left: 1px;
    line-height: 8px;
    color: #222;
}

.chart{
    display: grid;
    grid-template-columns: 8px 25px 1fr;
    grid-template-rows: 161px 10px 8px;
    padding: 9px 7px 0 0;
    row-gap: 2px;
}

.y-title{
    display: flex;
    align-items: center;
    justify-content: center;
    font-size: 6px;
}

.y-title span{
    writing-mode: vertical-rl;
    transform: rotate(180deg);
}

.cats, .bars{
    display: flex;
    flex-direction: column;
}

.cats li, .bars li{
    display: flex;
    align-items: center;
    flex: 1;
}

.cats li{
    justify-content: flex-end;
    font-size: 5px;
    white-space: nowrap;
    color: #555;
}

.bars{
    margin-left: 5px;
    background-image: repeating-linear-gradient(90deg, #ededed 0 1px, transparent 1px 44px);
}

.bars i{
    height: 10px;
    background-color: #118dff;
}

.ticks{
    grid-column: 3;
    display: flex;
    margin-left: -17px;
    font-size: 5px;
    color: #555;
}

.ticks span{
    flex: 0 0 44px;
    text-align: center;
}

.x-title{
    grid-column: 3;
    font-size: 6px;
    line-height: 6px;
    text-align: center;
    color: #222;
}

/* resize handles */
.h{
    position: absolute;
    width: 8px;
    height: 8px;
    border: 1px solid #777;
    border-radius: 50%;
    background-color: #fff;
}
.tl, .tc, .tr{ top: -5px; }
.ml, .mr{ top: calc(50% - 4px); }
.bl, .bc, .br{ bottom: -4px; }
.tl, .ml, .bl{ left: -5px; }
.tc, .bc{ left: calc(50% - 4px); }
.tr, .mr, .br{ right: -5px; }

.visual-tools{
    position: absolute;
    right: 3px;
    bottom: -13px;
    display: flex;
    gap: 9px;
}

.visual-tools svg{
    width: 9px;
    height: 9px;
}

.side-tools{
    position: absolute;
    left: 264px;
    top: 0;
    display: flex;
    flex-direction: column;
    gap: 7px;
}

.side-tools button{
    width: 18px;
    height: 18px;
    padding: 3px;
    border-radius: 2px;
    background-color: #f7f7f7;
    box-shadow: 0 1px 3px #bbb;
}

.side-tools .on{
    background-color: #e3e3e3;
}

.side-tools svg{
    width: 12px;
    height: 12px;
}

.suggest{
    position: absolute;
    left: 287px;
    top: 0;
    width: 113px;
    padding: 6px 5px 5px;
    background-color: #f5f5f5;
    box-shadow: 0 1px 4px #999;
}

.suggest-head{
    display: flex;
    align-items: center;
    justify-content: space-between;
    margin-bottom: 8px;
}

.suggest-row{
    display: flex;
    align-items: center;
    gap: 4px;
    height: 19px;
    margin: 2px 0 6px;
    padding-left: 3px;
    border: 1px solid #999;
    background-color: #fff;
}

.suggest-row > svg{
    width: 12px;
    height: 12px;
}

.suggest-row button{
    margin-left: auto;
    padding: 3px 4px 3px 5px;
    border-left: 1px solid #999;
}

.toggle{
    display: flex;
    align-items: center;
    gap: 5px;
    margin-bottom: 7px;
}

.toggle input{
    position: absolute;
    opacity: 0;
}

.pill{
    display: flex;
    align-items: center;
    justify-content: space-between;
    width: 20px;
    height: 10px;
    padding: 0 2px 0 3px;
    border-radius: 5px;
    font-size: 6px;
    color: white;
    background-color: #117865;
}

.pill::after{
    content: "";
    width: 6px;
    height: 6px;
    border-radius: 50%;
    background-color: white;
}

/* field wells */
.well{
    display: flex;
    flex-direction: column;
    gap: 4px;
    padding: 3px;
    border: 1px dashed #999;
}

.suggest .well{
    margin-top: 2px;
}

.field, .add{
    height: 17px;
    border: 1px solid #999;
    border-radius: 1px;
    background-color: #fff;
}

.field{
    display: flex;
    align-items: center;
    padding-left: 3px;
    background-color: #fafafa;
}

.field span{
    flex: 1;
}

.field .next{
    margin-left: 5px;
    padding: 1px 4px 1px 5px;
    border-left: 1px solid #777;
}

.add{
    width: 100%;
    font-weight: 600;
    color: #222;
}

/* panes */
.pane-head{
    display: flex;
    align-items: center;
    gap: 8px;
    height: 24px;
    padding-right: 6px;
}

.pane-head h2{
    flex: 1;
}

.hi, .lead{
    width: 8px;
    height: 8px;
}

.filters{
    width: 126px;
    border-left: 1px solid #ccc;
}

.filters .pane-head{
    gap: 11px;
    padding: 0 7px 0 8px;
}

.filters h2{
    margin-left: -5px;
}

.filter-search{
    display: flex;
    align-items: center;
    gap: 9px;
    height: 19px;
    margin: 4px 8px 2px 4px;
    padding-left: 7px;
    border: 1px solid #aaa;
}

.filter-search svg, .field-search svg{
    width: 8px;
    height: 8px;
}

.filter-search input, .field-search input{
    width: 100%;
}

.filter-list{
    display: flex;
    flex-direction: column;
    gap: 4px;
    padding: 11px 6px 0 4px;
    border-top: 1px solid #ccc;
}

.filter-title{
    display: flex;
    justify-content: space-between;
    margin-bottom: 1px;
}

.filter-title span{
    padding-right: 3px;
}

.card + .filter-title{
    margin-top: 14px;
}

.card{
    height: 28px;
    padding: 2px 5px;
    border: 1px solid #d0d0d0;
    border-radius: 1px;
    line-height: 11px;
}

.drop{
    line-height: 23px;
    text-align: center;
}

.build{
    position: relative;
    width: 113px;
    padding-left: 4px;
    border-left: 1px solid #d8d8d8;
}

.build-body{
    width: 102px;
}

.build-body p{
    margin: 5px 0 2px;
}

.build-body p:first-child{
    margin-top: 0;
}

.visuals{
    display: grid;
    grid-template-columns: repeat(6, 1fr);
    grid-template-rows: repeat(8, 1fr);
    place-items: center;
    height: 133px;
    padding: 1px;
    border: 1px solid #999;
    background-color: #fff;
}

.visuals svg{
    width: 12px;
    height: 12px;
}

.visuals button{
    position: relative;
}

.visuals .small{
    width: 8px;
    height: 8px;
}

.visuals .script{
    font-size: 9px;
    font-weight: 600;
    color: #2573a8;
}

.visuals .cursor{
    position: absolute;
    left: 7px;
    top: 7px;
    width: 9px;
    height: 11px;
    fill: #fff;
    stroke: #444;
}

.scroll{
    position: absolute;
    right: 0;
    top: 23px;
    bottom: 39px;
    width: 4px;
    border-radius: 2px;
    background-color: #666;
}

.fields{
    width: 112px;
    border-left: 1px solid #d8d8d8;
}

.fields .pane-head{
    padding-left: 4px;
}

.field-search{
    display: flex;
    align-items: center;
    gap: 6px;
    height: 14px;
    margin: 5px 3px 6px;
    padding-left: 6px;
    border-bottom: 1px solid #888;
    border-radius: 2px;
    background-color: #fff;
    box-shadow: 0 0 1px #999;
}

.tree label, .node{
    display: flex;
    align-items: center;
    height: 15px;
}

.tree label{
    padding-left: 26px;
}

.node{
    padding-left: 7px;
}

.tbl{
    width: 12px;
    height: 11px;
    margin: 3px 0 0 3px;
}

.tree input{
    appearance: none;
    width: 8px;
    height: 8px;
    border: 1px solid #888;
    border-radius: 2px;
    background-color: #fff;
}

.tree input:checked{
    border-color: #117865;
    background-color: #117865;
}

.tree input:checked::after{
    content: "";
    display: block;
    width: 4px;
    height: 2px;
    margin: 1px;
    border: solid white;
    border-width: 0 0 1px 1px;
    transform: rotate(-45deg);
}

.tree i{
    width: 16px;
    padding-left: 5px;
    font: normal 10px "DejaVu Sans", sans-serif;
}

.row-more{
    width: 6px;
    height: 6px;
    margin: 0 4px 0 auto;
}

.rail{
    display: flex;
    flex-direction: column;
    width: 13px;
    border-left: 1px solid #ccc;
    background-color: #fff;
    overflow: hidden;
}

.rail button{
    height: 20px;
    padding: 3px 0;
    border-bottom: 1px solid transparent;
}

.rail .on{
    background-color: #ececec;
    border-color: #aaa;
}

.rail svg{
    width: 14px;
    height: 13px;
}

.rail .gear{
    margin-top: auto;
    border-top: 1px solid #ccc;
}

/* page tabs */
.pages{
    display: flex;
    align-items: stretch;
    height: 22px;
}

.device{
    width: 15px;
    margin: 0 6px 2px;
    border-bottom: 1px solid transparent;
}

.device.on{
    border-bottom: 2px solid #117865;
}

.device svg{
    width: 13px;
    height: 13px;
    margin: 0 auto;
}

.arrow{
    width: 13px;
    padding-left: 3px;
}

.arrow svg{
    width: 6px;
    height: 6px;
}

.page-tab{
    width: 46px;
    border-left: 1px solid #ccc;
    border-bottom: 2px solid #117865;
    font-weight: 600;
    color: #222;
}

.page-add{
    width: 25px;
    background-color: #117865;
}

.page-add svg{
    width: 8px;
    height: 8px;
    margin: 0 auto;
    stroke: white;
    stroke-width: 2;
}

/* status bar */
.status{
    display: flex;
    align-items: center;
    height: 15px;
    border-top: 1px solid #ddd;
}

.live{
    margin-left: auto;
    padding-right: 3px;
}

.status a{
    color: #16717f;
}

.zoom{
    display: flex;
    align-items: center;
    gap: 3px;
    width: 136px;
    padding-left: 11px;
}

.zoom button{
    font-weight: 700;
}

.zoom input{
    appearance: none;
    width: 64px;
    height: 8px;
    background: linear-gradient(#777, #777) center / 100% 1px no-repeat;
}

.zoom input::-webkit-slider-thumb{
    appearance: none;
    width: 3px;
    height: 7px;
    background-color: #222;
}

.zoom span{
    margin-left: 4px;
}

.zoom svg{
    width: 10px;
    height: 8px;
    margin-left: auto;
    margin-right: 3px;
}
```
